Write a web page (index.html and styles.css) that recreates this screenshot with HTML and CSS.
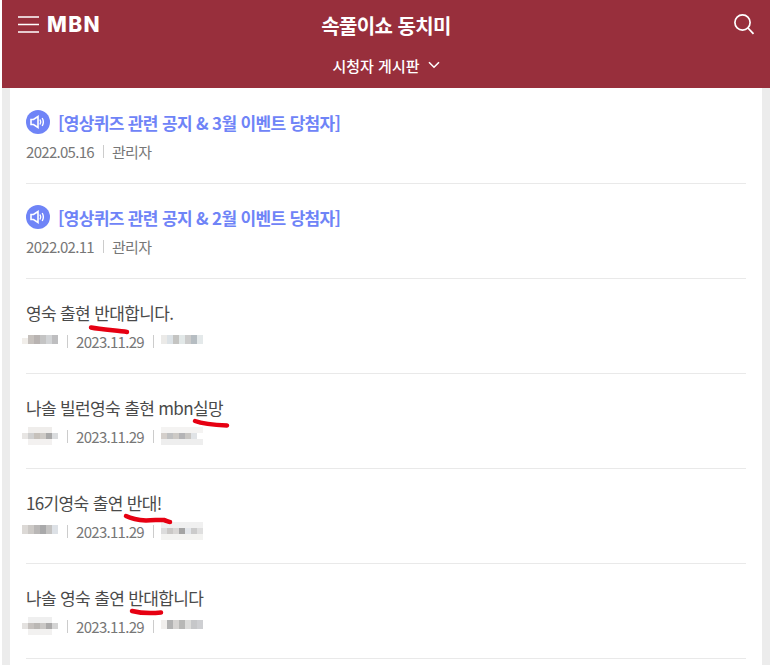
FILE: index.html
```html
<!DOCTYPE html>
<html lang="ko">

<head>
  <meta charset="UTF-8">
  <meta name="viewport" content="width=device-width, initial-scale=1.0">
  <title>속풀이쇼 동치미</title>
  <link rel="stylesheet" href="styles.css">
</head>

<body>
  <div class="page">

    <header class="top-bar">
      <div class="top-row">
        <div class="top-left">
          <svg class="menu-icon" width="21" height="17" viewBox="0 0 21 17">
            <path d="M0 1h21M0 8.5h21M0 16h21" stroke="#fff" stroke-width="1.6" fill="none" />
          </svg>
          <span class="logo">MBN</span>
        </div>
        <h1 class="show-title">속풀이쇼 동치미</h1>
        <div class="top-right">
          <svg width="22" height="22" viewBox="0 0 22 22">
            <circle cx="9.5" cy="9.5" r="7.6" stroke="#fff" stroke-width="1.7" fill="none" />
            <path d="M15 15l5.5 5.8" stroke="#fff" stroke-width="1.8" fill="none" />
          </svg>
        </div>
      </div>
      <div class="sub-row">
        <span>시청자 게시판</span>
        <svg width="12" height="8" viewBox="0 0 12 8">
          <path d="M1 1.2l5 5 5-5" stroke="#fff" stroke-width="1.6" fill="none" />
        </svg>
      </div>
    </header>

    <main class="board">

      <div class="post notice">
        <div class="post-title">
          <span class="notice-icon">
            <svg width="16" height="14" viewBox="0 0 16 14">
              <path d="M1 4.5h2.5L8 1.5v11L3.5 9.500H1z" fill="none" stroke="#fff" stroke-width="1.6" />
              <path d="M10 4.500q1.500 2.500 0 5M12.200 3q2.300 4 0 8" fill="none" stroke="#fff" stroke-width="1.400" />
            </svg>
          </span>
          [영상퀴즈 관련 공지 &amp; 3월 이벤트 당첨자]
        </div>
        <div class="post-meta">
          <span>2022.05.16</span><i class="sep"></i><span>관리자</span>
        </div>
      </div>

      <div class="post notice">
        <div class="post-title">
          <span class="notice-icon">
            <svg width="16" height="14" viewBox="0 0 16 14">
              <path d="M1 4.5h2.5L8 1.5v11L3.5 9.500H1z" fill="none" stroke="#fff" stroke-width="1.6" />
              <path d="M10 4.500q1.500 2.500 0 5M12.200 3q2.300 4 0 8" fill="none" stroke="#fff" stroke-width="1.400" />
            </svg>
          </span>
          [영상퀴즈 관련 공지 &amp; 2월 이벤트 당첨자]
        </div>
        <div class="post-meta">
          <span>2022.02.11</span><i class="sep"></i><span>관리자</span>
        </div>
      </div>

      <div class="post">
        <div class="post-title">영숙 출현 반대합니다.</div>
        <div class="post-meta">
          <svg class="blur-name" width="36" height="18" viewBox="0 0 6 3" shape-rendering="crispEdges">
            <rect x="0" y="1" width="1" height="1" fill="#f1eeea" />
            <rect x="1" y="0.500" width="1" height="1.500" fill="#c6c1bd" />
            <rect x="2" y="0.500" width="1" height="1.500" fill="#b8b3b1" />
            <rect x="3" y="0.500" width="1" height="1.500" fill="#c4c4c4" />
            <rect x="4" y="0.500" width="1" height="1.500" fill="#d2d4d6" />
            <rect x="5" y="0.500" width="1" height="1.500" fill="#bebec0" />
          </svg>
          <i class="sep"></i><span>2023.11.29</span><i class="sep"></i>
          <svg class="blur-id" width="43" height="18" viewBox="0 0 7 3" shape-rendering="crispEdges">
            <rect x="0" y="0.500" width="1" height="1.500" fill="#ebeae8" />
            <rect x="1" y="0.500" width="1" height="1.500" fill="#dce2e6" />
            <rect x="2" y="0.500" width="1" height="1.500" fill="#c4c4c2" />
            <rect x="3" y="0.500" width="1" height="1.500" fill="#e2e8e8" />
            <rect x="4" y="0.500" width="1" height="1.500" fill="#cccccc" />
            <rect x="5" y="0.500" width="1" height="1.500" fill="#b6bdc2" />
            <rect x="6" y="0.500" width="1" height="1.500" fill="#e4e9ea" />
          </svg>
        </div>
      </div>

      <div class="post">
        <div class="post-title">나솔 빌런영숙 출현 mbn실망</div>
        <div class="post-meta">
          <svg class="blur-name" width="36" height="18" viewBox="0 0 6 3" shape-rendering="crispEdges">
            <rect x="1" y="0" width="4" height="1" fill="#efedeb" />
            <rect x="0" y="1" width="1" height="1" fill="#e8e6e4" />
            <rect x="1" y="1" width="1" height="1" fill="#d0d0d0" />
            <rect x="2" y="1" width="1" height="1" fill="#c6c1bb" />
            <rect x="3" y="1" width="1" height="1" fill="#cdcac6" />
            <rect x="4" y="1" width="1" height="1" fill="#a9a9a9" />
            <rect x="5" y="1" width="1" height="1" fill="#dadcde" />
            <rect x="1" y="2" width="4" height="1" fill="#f3f1f0" />
          </svg>
          <i class="sep"></i><span>2023.11.29</span><i class="sep"></i>
          <svg class="blur-id" width="43" height="18" viewBox="0 0 7 3" shape-rendering="crispEdges">
            <rect x="0" y="0" width="7" height="1" fill="#f4f3f2" />
            <rect x="0" y="1" width="1" height="1" fill="#d4cfcb" />
            <rect x="1" y="1" width="1" height="1" fill="#c0c1c2" />
            <rect x="2" y="1" width="1" height="1" fill="#cdcac6" />
            <rect x="3" y="1" width="1" height="1" fill="#b4b4b6" />
            <rect x="4" y="1" width="1" height="1" fill="#c9c7c4" />
            <rect x="5" y="1" width="1" height="1" fill="#e0e3e6" />
            <rect x="0" y="2" width="7" height="1" fill="#eeeeee" />
          </svg>
        </div>
      </div>

      <div class="post">
        <div class="post-title">16기영숙 출연 반대!</div>
        <div class="post-meta">
          <svg class="blur-name" width="36" height="18" viewBox="0 0 6 3" shape-rendering="crispEdges">
            <rect x="0" y="0.500" width="1" height="1.500" fill="#dcd9d6" />
            <rect x="1" y="0.500" width="1" height="1.500" fill="#ccc9c6" />
            <rect x="2" y="0.500" width="1" height="1.500" fill="#b9b7b6" />
            <rect x="3" y="0.500" width="1" height="1.500" fill="#a9a9aa" />
            <rect x="4" y="0.500" width="1" height="1.500" fill="#c4c3c2" />
            <rect x="5" y="0.500" width="1" height="1.500" fill="#dde1e6" />
          </svg>
          <i class="sep"></i><span>2023.11.29</span><i class="sep"></i>
          <svg class="blur-id" width="43" height="18" viewBox="0 0 7 3" shape-rendering="crispEdges">
            <rect x="0" y="0" width="7" height="1" fill="#f0f0f0" />
            <rect x="0" y="1" width="1" height="1" fill="#dcdcdc" />
            <rect x="1" y="1" width="1" height="1" fill="#cac8c6" />
            <rect x="2" y="1" width="1" height="1" fill="#d9d7d5" />
            <rect x="3" y="1" width="1" height="1" fill="#a4a4a4" />
            <rect x="4" y="1" width="1" height="1" fill="#e3e6ea" />
            <rect x="5" y="1" width="1" height="1" fill="#cbcbcb" />
            <rect x="6" y="1" width="1" height="1" fill="#dfdfdf" />
            <rect x="0" y="2" width="7" height="1" fill="#f3f3f1" />
          </svg>
        </div>
      </div>

      <div class="post">
        <div class="post-title">나솔 영숙 출연 반대합니다</div>
        <div class="post-meta">
          <svg class="blur-name" width="36" height="18" viewBox="0 0 6 3" shape-rendering="crispEdges">
            <rect x="1" y="0" width="4" height="1" fill="#efefef" />
            <rect x="0" y="1" width="1" height="1" fill="#e4e2e0" />
            <rect x="1" y="1" width="1" height="1" fill="#c6c2bf" />
            <rect x="2" y="1" width="1" height="1" fill="#bbb8b5" />
            <rect x="3" y="1" width="1" height="1" fill="#c9c7c5" />
            <rect x="4" y="1" width="1" height="1" fill="#abaaaa" />
            <rect x="5" y="1" width="1" height="1" fill="#d4d4d4" />
            <rect x="1" y="2" width="4" height="1" fill="#f2f1f0" />
          </svg>
          <i class="sep"></i><span>2023.11.29</span><i class="sep"></i>
          <svg class="blur-id" width="43" height="18" viewBox="0 0 7 3" shape-rendering="crispEdges">
            <rect x="0" y="0.500" width="1" height="1.500" fill="#f1efed" />
            <rect x="1" y="0.500" width="1" height="1.500" fill="#b2b2b2" />
            <rect x="2" y="0.500" width="1" height="1.500" fill="#d6d4d2" />
            <rect x="3" y="0.500" width="1" height="1.500" fill="#b8b8b6" />
            <rect x="4" y="0.500" width="1" height="1.500" fill="#dddddb" />
            <rect x="5" y="0.500" width="1" height="1.500" fill="#c6c7c9" />
            <rect x="6" y="0.500" width="1" height="1.500" fill="#cecfd2" />
          </svg>
        </div>
      </div>

    </main>

    <!-- red marker strokes drawn over the shot -->
    <svg class="marks" width="778" height="665" viewBox="0 0 778 665">
      <path d="M91 327.500c10 2 26 3 36 4.500" />
      <path d="M195 421c8 3 20 4 32 4.500" />
      <path d="M126 516c6 3 12 4 20 4.500c8 0 14-1 18-.5c3 1 5 2 6 2" />
      <path d="M132 611c8 2 20 2.500 29 1.500" />
    </svg>

  </div>
</body>

</html>
```

FILE: styles.css
```css
* {
  margin: 0;
  padding: 0;
  box-sizing: border-box;
}

html,
body {
  background: #fff;
  overflow: hidden;
}

body {
  font-family: "Noto Sans CJK KR", "Noto Sans", sans-serif;
}

.page {
  position: relative;
  width: 778px;
  height: 665px;
  overflow: hidden;
  padding-left: 2px;
}

.top-bar {
  width: 768px;
  height: 88px;
  background: #982f3c;
  color: #fff;
}

.top-row {
  display: grid;
  grid-template-columns: 1fr auto 1fr;
  align-items: center;
  height: 50px;
  padding: 0 16px;
}

.top-left {
  display: flex;
  align-items: center;
  gap: 8px;
}

.menu-icon {
  margin-top: -2px;
}

.logo {
  font-family: "Inter", sans-serif;
  font-size: 21px;
  font-weight: 800;
  line-height: 1;
  letter-spacing: 1.4px;
  margin-top: -1px;
}

.show-title {
  font-size: 20px;
  font-weight: 700;
  letter-spacing: -0.6px;
}

.top-right {
  display: flex;
  justify-content: flex-end;
  margin-top: -3px;
  margin-right: -1px;
}

.sub-row {
  display: flex;
  align-items: center;
  justify-content: center;
  gap: 8px;
  height: 30px;
  font-size: 15px;
  font-weight: 500;
}

.board {
  width: 768px;
  height: 577px;
  background: #fff;
  border-left: 8px solid #ececec;
  border-right: 8px solid #ececec;
  padding: 1px 16px 0;
}

.post {
  height: 95px;
  padding-top: 20px;
  border-bottom: 1px solid #e9e9e9;
}

.post-title {
  display: flex;
  align-items: center;
  height: 26px;
  font-size: 17px;
  color: #4a4a4a;
  letter-spacing: -0.65px;
}

.notice .post-title {
  color: #6f84f7;
  font-weight: 700;
  gap: 8px;
}

.notice-icon {
  display: flex;
  align-items: center;
  justify-content: center;
  width: 24px;
  height: 24px;
  border-radius: 50%;
  background: #6f84f7;
}

.post-meta {
  display: flex;
  align-items: center;
  height: 24px;
  margin-top: 4px;
  font-size: 15px;
  color: #777;
  letter-spacing: -0.7px;
}

.sep {
  width: 1px;
  height: 13px;
  margin: 0 8px 0 9px;
  background: #ccc;
}

.blur-name {
  margin-left: -4px;
}

.blur-id {
  margin-left: -2px;
}

.marks {
  position: absolute;
  top: 0;
  left: 0;
  pointer-events: none;
}

.marks path {
  fill: none;
  stroke: #e60012;
  stroke-width: 4.5;
  stroke-linecap: round;
}
```
